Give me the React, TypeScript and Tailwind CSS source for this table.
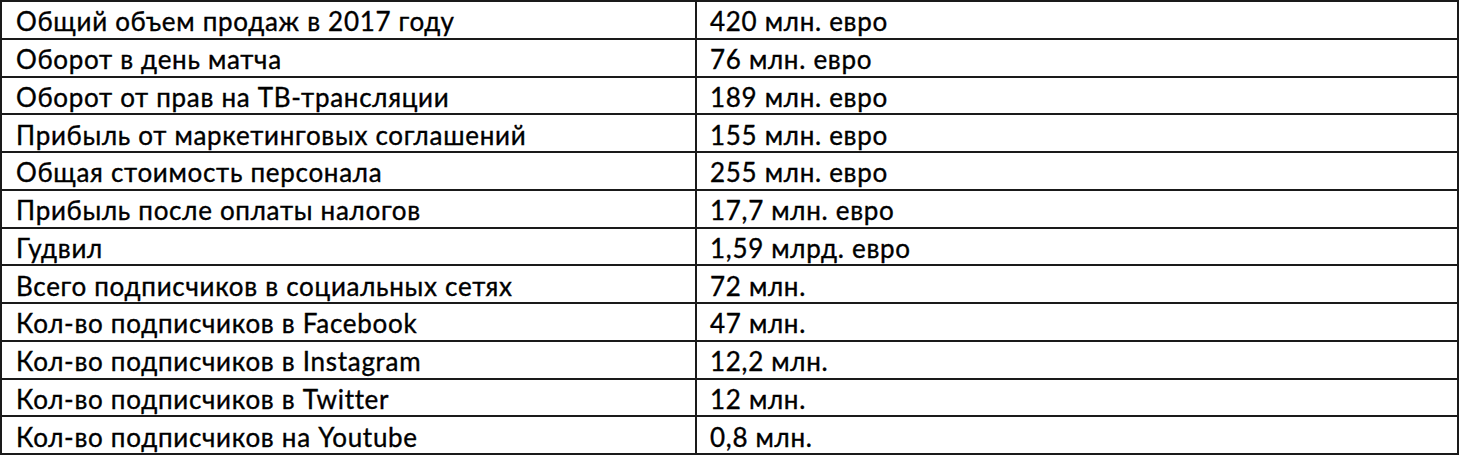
const rows: [string, string][] = [
  ['Общий объем продаж в 2017 году', '420 млн. евро'],
  ['Оборот в день матча', '76 млн. евро'],
  ['Оборот от прав на ТВ-трансляции', '189 млн. евро'],
  ['Прибыль от маркетинговых соглашений', '155 млн. евро'],
  ['Общая стоимость персонала', '255 млн. евро'],
  ['Прибыль после оплаты налогов', '17,7 млн. евро'],
  ['Гудвил', '1,59 млрд. евро'],
  ['Всего подписчиков в социальных сетях', '72 млн.'],
  ['Кол-во подписчиков в Facebook', '47 млн.'],
  ['Кол-во подписчиков в Instagram', '12,2 млн.'],
  ['Кол-во подписчиков в Twitter', '12 млн.'],
  ['Кол-во подписчиков на Youtube', '0,8 млн.'],
];

export default function App() {
  return (
    <div className="w-[1460px] h-[457px] bg-white">
      <div
        className="w-[1459px] border-t-2 border-l-2 border-r-2 border-[#1a1a1a] text-black text-[26px] leading-none tracking-[0.7px] [-webkit-text-stroke:0.35px_black]"
        style={{ fontFamily: 'Lato, "Noto Sans", sans-serif' }}
      >
        {rows.map(([k, v]) => (
          <div key={k} className="flex h-[37.75px] box-border border-b-2 border-[#1a1a1a]">
            <div className="w-[695px] shrink-0 box-border border-r-2 border-[#1a1a1a] pl-[14px] flex items-center pt-[3px] whitespace-nowrap">
              {k}
            </div>
            <div className="flex-1 pl-[13px] flex items-center pt-[3px] whitespace-nowrap">{v}</div>
          </div>
        ))}
      </div>
    </div>
  );
}
